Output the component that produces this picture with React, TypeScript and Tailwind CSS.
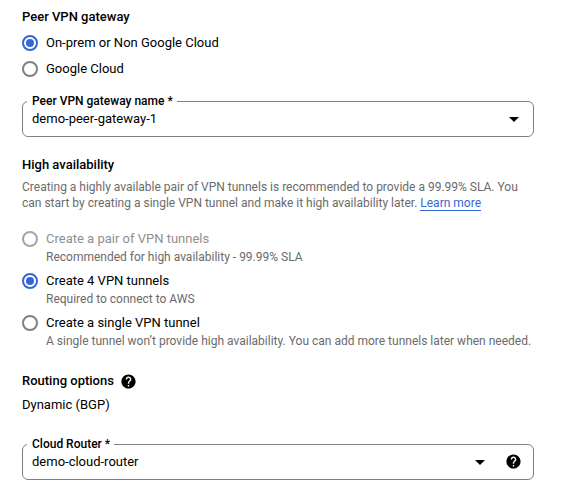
import { useState } from "react";
import { MdArrowDropDown, MdHelp } from "react-icons/md";

const gatewayTypes = [
  { value: "on-prem", label: "On-prem or Non Google Cloud" },
  { value: "google-cloud", label: "Google Cloud" },
];

const tunnelOptions = [
  {
    value: "pair",
    label: "Create a pair of VPN tunnels",
    hint: "Recommended for high availability - 99.99% SLA",
    disabled: true,
  },
  {
    value: "four",
    label: "Create 4 VPN tunnels",
    hint: "Required to connect to AWS",
  },
  {
    value: "single",
    label: "Create a single VPN tunnel",
    hint: "A single tunnel won’t provide high availability. You can add more tunnels later when needed.",
  },
];

type RadioOptionProps = {
  name: string;
  value: string;
  label: string;
  hint?: string;
  disabled?: boolean;
  checked: boolean;
  onChange: (value: string) => void;
};

function RadioOption({
  name,
  value,
  label,
  hint,
  disabled,
  checked,
  onChange,
}: RadioOptionProps) {
  const id = `${name}-${value}`;
  return (
    <div className="flex items-start gap-2">
      <input
        type="radio"
        id={id}
        name={name}
        value={value}
        checked={checked}
        disabled={disabled}
        aria-describedby={hint ? `${id}-hint` : undefined}
        onChange={() => onChange(value)}
        className="mt-0.5 size-4 shrink-0 appearance-none rounded-full border-2 border-[#808080] bg-clip-content p-0.5 checked:border-[#3367d6] checked:bg-[#3367d6] disabled:border-[#a6a6a6]"
      />
      <div>
        <label
          htmlFor={id}
          className={`block leading-5 ${disabled ? "text-[#8f8f8f]" : ""}`}
        >
          {label}
        </label>
        {hint && (
          <p id={`${id}-hint`} className="text-xs text-[#6b6b6b]">
            {hint}
          </p>
        )}
      </div>
    </div>
  );
}

type SelectFieldProps = {
  id: string;
  label: string;
  options: string[];
  help?: string;
};

function SelectField({ id, label, options, help }: SelectFieldProps) {
  return (
    <fieldset className="rounded-md border border-[#808080]">
      <legend className="ml-1 pr-1 pl-[5px] text-xs font-medium">
        <label htmlFor={id}>{label} *</label>
      </legend>
      <div className="flex h-[27px] items-start pr-[7px]">
        <div className="grid h-5 flex-1 items-center">
          <select
            id={id}
            className="col-start-1 row-start-1 h-5 w-full appearance-none bg-transparent pr-8 pl-[9px] outline-none"
          >
            {options.map((option) => (
              <option key={option}>{option}</option>
            ))}
          </select>
          <MdArrowDropDown className="pointer-events-none col-start-1 row-start-1 -my-1 size-6 justify-self-end" />
        </div>
        {help && (
          <button type="button" aria-label={help} className="mt-px mr-1 ml-[13px]">
            <MdHelp className="size-[17px]" />
          </button>
        )}
      </div>
    </fieldset>
  );
}

export default function App() {
  const [gatewayType, setGatewayType] = useState("on-prem");
  const [tunnels, setTunnels] = useState("four");

  return (
    <form className="bg-white pt-[7px] pr-[34px] pb-4 pl-[22px] font-[Roboto,sans-serif] text-[13px] leading-5 text-black">
      <section>
        <h2 className="font-medium">Peer VPN gateway</h2>
        <div
          role="radiogroup"
          aria-label="Peer VPN gateway"
          className="mt-1.5 flex flex-col gap-1.5"
        >
          {gatewayTypes.map((option) => (
            <RadioOption
              key={option.value}
              name="gateway-type"
              {...option}
              checked={gatewayType === option.value}
              onChange={setGatewayType}
            />
          ))}
        </div>
        <div className="mt-3.5">
          <SelectField
            id="peer-gateway"
            label="Peer VPN gateway name"
            options={["demo-peer-gateway-1"]}
          />
        </div>
      </section>

      <section className="mt-[18px]">
        <h2 className="font-medium">High availability</h2>
        <p className="mt-1 text-xs text-[#6b6b6b]">
          Creating a highly available pair of VPN tunnels is recommended to
          provide a 99.99% SLA. You can start by creating a single VPN tunnel
          and make it high availability later.{" "}
          <a href="#" className="border-b border-[#3367d6] text-[#3367d6]">
            Learn more
          </a>
        </p>
        <div
          role="radiogroup"
          aria-label="High availability"
          className="mt-[18px] flex flex-col gap-1.5"
        >
          {tunnelOptions.map((option) => (
            <RadioOption
              key={option.value}
              name="tunnels"
              {...option}
              checked={tunnels === option.value}
              onChange={setTunnels}
            />
          ))}
        </div>
      </section>

      <section className="mt-[22px]">
        <div className="flex items-center gap-1.5">
          <h2 className="font-medium">Routing options</h2>
          <button type="button" aria-label="About routing options">
            <MdHelp className="size-[17px]" />
          </button>
        </div>
        <p className="mt-1">Dynamic (BGP)</p>
        <div className="mt-[21px]">
          <SelectField
            id="cloud-router"
            label="Cloud Router"
            options={["demo-cloud-router"]}
            help="About Cloud Router"
          />
        </div>
      </section>
    </form>
  );
}
